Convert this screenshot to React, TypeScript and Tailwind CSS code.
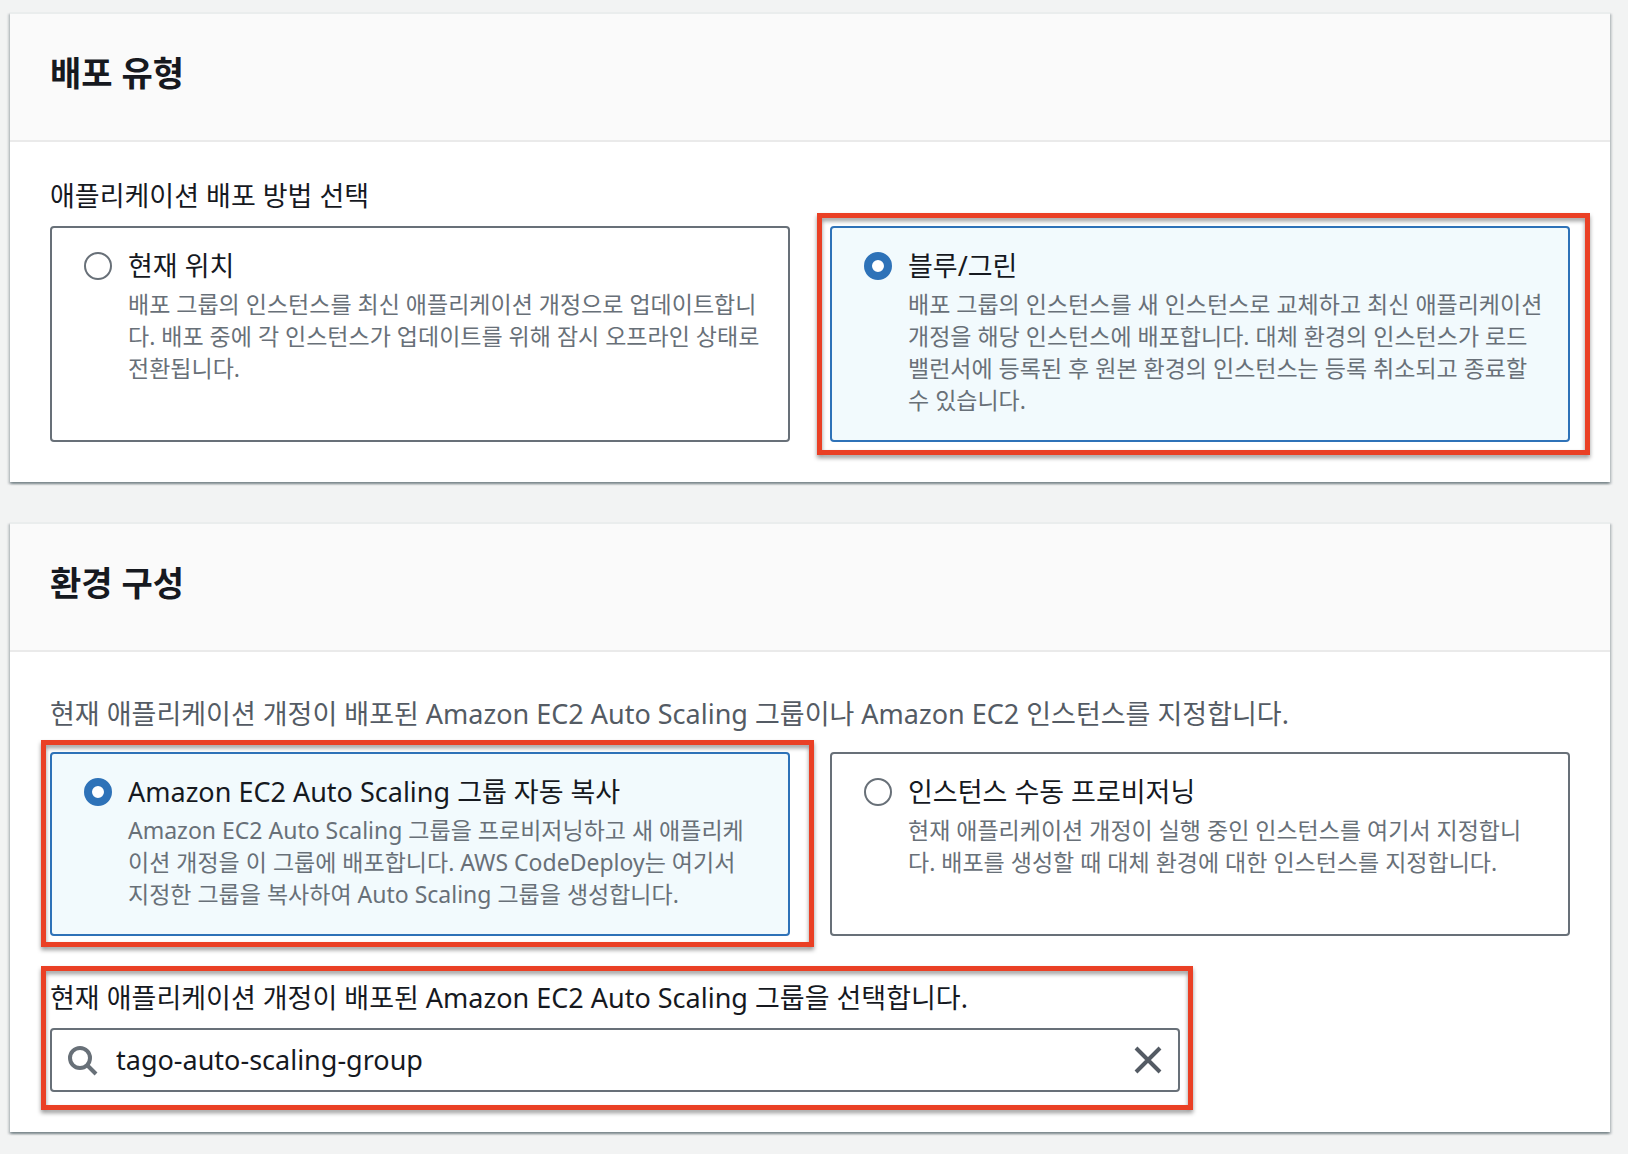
import { useState, type ReactNode } from "react";

type TileProps = {
  name: string;
  value: string;
  selected: string;
  onSelect: (value: string) => void;
  title: string;
  lines: string[];
  children?: ReactNode;
};

function Tile({ name, value, selected, onSelect, title, lines, children }: TileProps) {
  const checked = selected === value;
  return (
    <div className="relative flex min-w-0">
      <label
        className={
          checked
            ? "flex min-w-0 flex-1 gap-4 rounded border-2 border-[#2e72b8] bg-[#f2fafd] pt-4 pr-4 pb-6 pl-8"
            : "flex min-w-0 flex-1 gap-4 rounded border-2 border-[#687078] bg-white pt-4 pr-4 pb-6 pl-8"
        }
      >
        <input
          type="radio"
          name={name}
          value={value}
          checked={checked}
          onChange={() => onSelect(value)}
          className="mt-2 size-7 shrink-0 appearance-none rounded-full border-2 border-[#687078] bg-white checked:border-8 checked:border-[#2e72b8]"
        />
        <span className="flex min-w-0 flex-col">
          <span className="text-[27px] leading-[44px] text-[#16191f]">{title}</span>
          <span className="text-[23px] leading-8 text-[#687078]">
            {lines.map((line) => (
              <span key={line} className="block whitespace-nowrap">
                {line}
              </span>
            ))}
          </span>
        </span>
      </label>
      {children}
    </div>
  );
}

function Panel({ title, children }: { title: string; children: ReactNode }) {
  return (
    <section className="border-t-2 border-[#eaeded] bg-white shadow-[0_2px_2px_0_rgba(0,28,36,0.3),2px_2px_2px_0_rgba(0,28,36,0.15),-2px_2px_2px_0_rgba(0,28,36,0.15)]">
      <header className="border-b-2 border-[#eaeaea] bg-[#fafafa] px-10 pt-8 pb-10">
        <h2 className="text-[34px] leading-[54px] font-bold text-[#16191f]">{title}</h2>
      </header>
      {children}
    </section>
  );
}

const highlight =
  "pointer-events-none absolute border-[5px] border-[#ea4025] drop-shadow-[0_3px_2px_rgba(0,0,0,0.4)]";

export default function App() {
  const [method, setMethod] = useState("blue-green");
  const [environment, setEnvironment] = useState("auto-scaling");
  const [group, setGroup] = useState("tago-auto-scaling-group");

  return (
    <main className="flex min-h-screen flex-col gap-10 bg-[#f2f3f3] pt-3 pr-[18px] pb-[22px] pl-2.5 font-['Noto_Sans','Noto_Sans_CJK_KR',sans-serif] text-[#16191f]">
      <Panel title="배포 유형">
        <fieldset className="px-10 pt-8 pb-10">
          <legend className="float-left mb-2 w-full text-[27px] leading-[44px]">
            애플리케이션 배포 방법 선택
          </legend>
          <div className="clear-both grid grid-cols-2 gap-10">
            <Tile
              name="method"
              value="in-place"
              selected={method}
              onSelect={setMethod}
              title="현재 위치"
              lines={[
                "배포 그룹의 인스턴스를 최신 애플리케이션 개정으로 업데이트합니",
                "다. 배포 중에 각 인스턴스가 업데이트를 위해 잠시 오프라인 상태로",
                "전환됩니다.",
              ]}
            />
            <Tile
              name="method"
              value="blue-green"
              selected={method}
              onSelect={setMethod}
              title="블루/그린"
              lines={[
                "배포 그룹의 인스턴스를 새 인스턴스로 교체하고 최신 애플리케이션",
                "개정을 해당 인스턴스에 배포합니다. 대체 환경의 인스턴스가 로드",
                "밸런서에 등록된 후 원본 환경의 인스턴스는 등록 취소되고 종료할",
                "수 있습니다.",
              ]}
            >
              <div aria-hidden="true" className={`${highlight} -top-[13px] -right-5 -bottom-[13px] -left-[13px]`} />
            </Tile>
          </div>
        </fieldset>
      </Panel>

      <Panel title="환경 구성">
        <div className="flex flex-col gap-10 px-10 py-10">
          <fieldset>
            <legend className="mb-4 text-[27px] leading-[44px] text-[#545b64]">
              현재 애플리케이션 개정이 배포된 Amazon EC2 Auto Scaling 그룹이나 Amazon EC2 인스턴스를 지정합니다.
            </legend>
            <div className="grid grid-cols-2 gap-10">
              <Tile
                name="environment"
                value="auto-scaling"
                selected={environment}
                onSelect={setEnvironment}
                title="Amazon EC2 Auto Scaling 그룹 자동 복사"
                lines={[
                  "Amazon EC2 Auto Scaling 그룹을 프로비저닝하고 새 애플리케",
                  "이션 개정을 이 그룹에 배포합니다. AWS CodeDeploy는 여기서",
                  "지정한 그룹을 복사하여 Auto Scaling 그룹을 생성합니다.",
                ]}
              >
                <div aria-hidden="true" className={`${highlight} -top-3 -right-6 -bottom-[11px] -left-[9px]`} />
              </Tile>
              <Tile
                name="environment"
                value="manual"
                selected={environment}
                onSelect={setEnvironment}
                title="인스턴스 수동 프로비저닝"
                lines={[
                  "현재 애플리케이션 개정이 실행 중인 인스턴스를 여기서 지정합니",
                  "다. 배포를 생성할 때 대체 환경에 대한 인스턴스를 지정합니다.",
                ]}
              />
            </div>
          </fieldset>

          <div className="grid grid-cols-4 gap-10">
            <div className="relative col-span-3 flex flex-col gap-2">
              <label htmlFor="group" className="text-[27px] leading-[44px]">
                현재 애플리케이션 개정이 배포된 Amazon EC2 Auto Scaling 그룹을 선택합니다.
              </label>
              <div className="flex h-16 items-center rounded border-2 border-[#687078] bg-white px-4">
                <svg viewBox="0 0 32 32" className="size-8 shrink-0 fill-none stroke-[#687078] stroke-4" aria-hidden="true">
                  <circle cx="12" cy="14" r="10" />
                  <path d="M19 21l9 9" />
                </svg>
                <input
                  id="group"
                  type="text"
                  value={group}
                  onChange={(event) => setGroup(event.target.value)}
                  className="ml-4 min-w-0 flex-1 bg-transparent text-[27px] leading-[44px] outline-none"
                />
                <button type="button" aria-label="지우기" onClick={() => setGroup("")} className="shrink-0">
                  <svg viewBox="0 0 28 28" className="size-7 fill-none stroke-[#545b64] stroke-4">
                    <path d="M2 2l24 24M26 2L2 26" />
                  </svg>
                </button>
              </div>
              <div aria-hidden="true" className={`${highlight} -top-2.5 -right-[13px] -bottom-[18px] -left-[9px]`} />
            </div>
          </div>
        </div>
      </Panel>
    </main>
  );
}
